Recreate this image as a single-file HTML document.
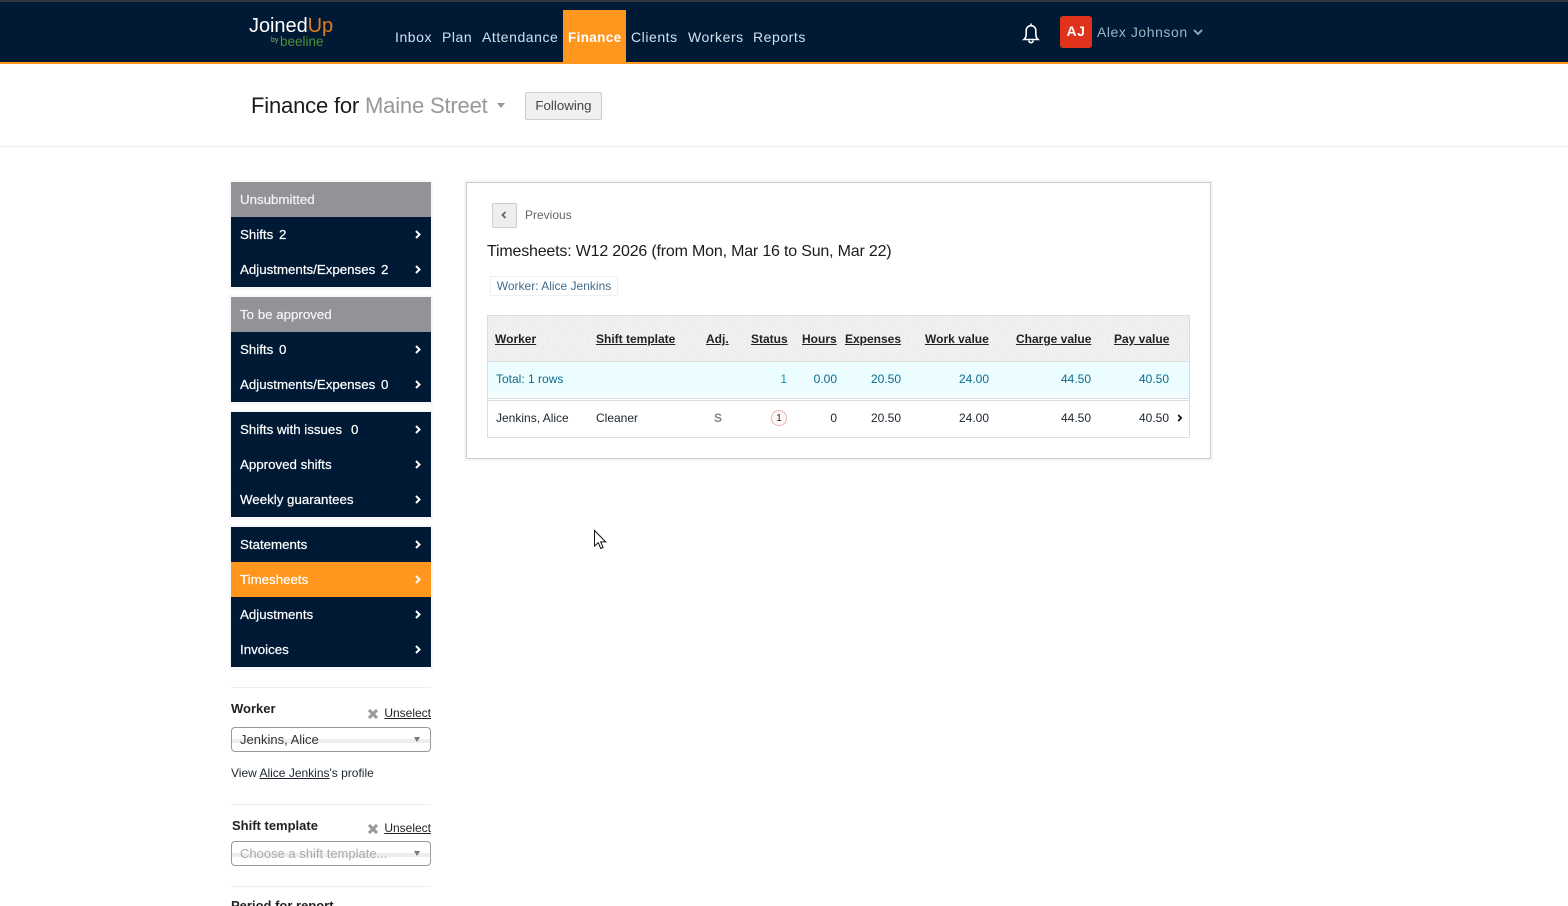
<!DOCTYPE html>
<html><head><meta charset="utf-8"><title>Finance</title>
<style>
html,body{margin:0;padding:0;background:#fff;overflow:hidden;width:1568px;height:906px}
#p{width:1568px;height:906px;position:relative;overflow:hidden;font-family:"Liberation Sans",sans-serif;color:#111}
.a,.t,.r{position:absolute;white-space:nowrap}
.t,.r{height:16px;line-height:16px}
.n{font-size:14px;letter-spacing:.55px;color:#cfe0ee;top:29px}
.s{position:absolute;left:231px;width:200px;height:35px;background:#001a35;color:#fff;font-size:13.3px;line-height:35px;text-indent:9px;white-space:nowrap;-webkit-text-stroke:.2px}
.s svg{position:absolute;left:184px;top:13px}
.s b{position:absolute;top:0;text-indent:0;font-weight:normal}
.h{background:#929297}
.g{position:absolute;left:229px;width:204px;background:#f8f7fb}
.th{font-size:12px;font-weight:bold;text-decoration:underline;color:#222;top:331px}
.c{font-size:12px;color:#1c2530}
.u{top:371px;color:#0e6a8c}
.v{top:410px}
.lb{font-size:13px;font-weight:bold;color:#222}
.sel{position:absolute;left:231px;width:198px;height:23px;border:1px solid #999;border-radius:4px;background:linear-gradient(#fff 0,#fff 11px,#eee 11px,#eee 15px,#fff 15px);font-size:13px;line-height:24px;text-indent:8px}
.sel i{position:absolute;left:182px;top:9px;width:0;height:0;border:3.5px solid transparent;border-top:5px solid #777;border-bottom:0}
.ln{position:absolute;left:231px;width:200px;height:1px;background:#eee}
.ul{font-size:12px;text-decoration:underline;color:#222}
</style></head><body>
<div id="p">

<div class="a" style="left:0;top:0;width:1568px;height:62px;background:#001a35"></div>
<div class="a" style="left:0;top:0;width:1568px;height:2px;background:#33363c"></div>
<div class="a" style="left:0;top:62px;width:1568px;height:2px;background:#ff971f"></div>
<div class="a" style="left:563px;top:10px;width:63px;height:52px;background:#ff971f"></div>

<div class="t" style="left:249px;top:15px;height:22px;line-height:22px;font-size:20px;letter-spacing:-.05px;color:#fff">Joined<span style="color:#d97f26">Up</span></div>
<div class="t" style="left:271px;top:36px;height:9px;line-height:9px;font-size:7px;color:#8fb37a">by</div>
<div class="t" style="left:280px;top:36px;height:12px;line-height:12px;font-size:13.5px;color:#4f8f35">beeline</div>

<div class="t n" style="left:395px">Inbox</div>
<div class="t n" style="left:442px">Plan</div>
<div class="t n" style="left:482px">Attendance</div>
<div class="t n" style="left:568px;top:30px;color:#fff;font-weight:bold;font-size:13.5px;letter-spacing:.35px">Finance</div>
<div class="t n" style="left:631px">Clients</div>
<div class="t n" style="left:688px">Workers</div>
<div class="t n" style="left:753px">Reports</div>

<svg class="a" style="left:1022px;top:22px" width="18" height="22" viewBox="0 0 18 22" fill="none" stroke="#fff" stroke-width="1.6"><path d="M2 17.5c1.6-1.5 2.2-3 2.2-5.5V8.5a4.8 4.8 0 0 1 9.6 0V12c0 2.500.6 4 2.200 5.500z"/><path d="M9 3.500V1.500M6.800 18.500a2.200 2.200 0 0 0 4.400 0"/></svg>
<div class="a" style="left:1060px;top:16px;width:32px;height:32px;background:#e1321b;border-radius:3px;color:#fff;font-size:14px;font-weight:bold;line-height:31px;text-align:center;letter-spacing:.5px">AJ</div>
<div class="t" style="left:1097px;top:24px;font-size:14px;letter-spacing:.55px;color:#9fb2c3">Alex Johnson</div>
<svg class="a" style="left:1193px;top:29px" width="10" height="7" viewBox="0 0 10 7" fill="none" stroke="#8fa2b3" stroke-width="2"><path d="M1 1l4 4 4-4"/></svg>

<div class="t" style="left:251px;top:92px;height:28px;line-height:28px;font-size:22px;letter-spacing:-.18px;color:#1b1b1b">Finance for <span style="color:#97979c">Maine Street</span></div>
<div class="a" style="left:497px;top:103px;width:0;height:0;border:4.500px solid transparent;border-top:5px solid #999;border-bottom:0"></div>
<div class="a" style="left:525px;top:92px;width:75px;height:26px;border:1px solid #ccc;border-radius:2px;background:#f0f0f0;font-size:13.3px;line-height:25px;text-align:center;color:#444">Following</div>
<div class="a" style="left:0;top:146px;width:1568px;height:1px;background:#eee"></div>

<!-- sidebar -->
<div class="g" style="top:180px;height:110px"></div>
<div class="g" style="top:295px;height:110px"></div>
<div class="g" style="top:410px;height:110px"></div>
<div class="g" style="top:525px;height:145px"></div>

<div class="s h" style="top:182px;color:#f3f3f3">Unsubmitted</div>
<div class="s" style="top:217px">Shifts<b style="left:48px">2</b><svg width="6" height="9" viewBox="0 0 6 9" fill="none" stroke="#fff" stroke-width="2"><path d="M1 1l3.500 3.500L1 8"/></svg></div>
<div class="s" style="top:252px">Adjustments/Expenses<b style="left:150px">2</b><svg width="6" height="9" viewBox="0 0 6 9" fill="none" stroke="#fff" stroke-width="2"><path d="M1 1l3.500 3.500L1 8"/></svg></div>

<div class="s h" style="top:297px;color:#f3f3f3">To be approved</div>
<div class="s" style="top:332px">Shifts<b style="left:48px">0</b><svg width="6" height="9" viewBox="0 0 6 9" fill="none" stroke="#fff" stroke-width="2"><path d="M1 1l3.500 3.500L1 8"/></svg></div>
<div class="s" style="top:367px">Adjustments/Expenses<b style="left:150px">0</b><svg width="6" height="9" viewBox="0 0 6 9" fill="none" stroke="#fff" stroke-width="2"><path d="M1 1l3.500 3.500L1 8"/></svg></div>

<div class="s" style="top:412px">Shifts with issues<b style="left:120px">0</b><svg width="6" height="9" viewBox="0 0 6 9" fill="none" stroke="#fff" stroke-width="2"><path d="M1 1l3.500 3.500L1 8"/></svg></div>
<div class="s" style="top:447px">Approved shifts<svg width="6" height="9" viewBox="0 0 6 9" fill="none" stroke="#fff" stroke-width="2"><path d="M1 1l3.500 3.500L1 8"/></svg></div>
<div class="s" style="top:482px">Weekly guarantees<svg width="6" height="9" viewBox="0 0 6 9" fill="none" stroke="#fff" stroke-width="2"><path d="M1 1l3.500 3.500L1 8"/></svg></div>

<div class="s" style="top:527px">Statements<svg width="6" height="9" viewBox="0 0 6 9" fill="none" stroke="#fff" stroke-width="2"><path d="M1 1l3.500 3.500L1 8"/></svg></div>
<div class="s" style="top:562px;background:#ff971f">Timesheets<svg width="6" height="9" viewBox="0 0 6 9" fill="none" stroke="#fff" stroke-width="2"><path d="M1 1l3.500 3.500L1 8"/></svg></div>
<div class="s" style="top:597px">Adjustments<svg width="6" height="9" viewBox="0 0 6 9" fill="none" stroke="#fff" stroke-width="2"><path d="M1 1l3.500 3.500L1 8"/></svg></div>
<div class="s" style="top:632px">Invoices<svg width="6" height="9" viewBox="0 0 6 9" fill="none" stroke="#fff" stroke-width="2"><path d="M1 1l3.500 3.500L1 8"/></svg></div>

<div class="ln" style="top:687px"></div>
<div class="t lb" style="left:231px;top:701px">Worker</div>
<svg class="a" style="left:368px;top:709px" width="10" height="10" viewBox="0 0 10 10" fill="none" stroke="#999" stroke-width="3"><path d="M1 1l8 8M9 1l-8 8"/></svg>
<div class="r ul" style="right:1137px;top:705px">Unselect</div>
<div class="sel" style="top:727px;color:#333">Jenkins, Alice<i></i></div>
<div class="t" style="left:231px;top:765px;font-size:12px;color:#1c2530">View <span style="text-decoration:underline">Alice Jenkins</span>'s profile</div>

<div class="ln" style="top:804px"></div>
<div class="t lb" style="left:232px;top:818px">Shift template</div>
<svg class="a" style="left:368px;top:824px" width="10" height="10" viewBox="0 0 10 10" fill="none" stroke="#999" stroke-width="3"><path d="M1 1l8 8M9 1l-8 8"/></svg>
<div class="r ul" style="right:1137px;top:820px">Unselect</div>
<div class="sel" style="top:841px;color:#aaa">Choose a shift template...<i></i></div>
<div class="ln" style="top:886px"></div>
<div class="t lb" style="left:231px;top:898px">Period for report</div>

<!-- main panel -->
<div class="a" style="left:464px;top:180px;width:749px;height:281px;background:#f6f5fa"></div>
<div class="a" style="left:466px;top:182px;width:743px;height:275px;border:1px solid #ccc;background:#fff"></div>
<div class="a" style="left:492px;top:203px;width:23px;height:23px;border:1px solid #ccc;border-radius:2px;background:#eee"></div>
<svg class="a" style="left:501px;top:211px" width="6" height="8" viewBox="0 0 6 8" fill="none" stroke="#666" stroke-width="1.800"><path d="M4.500 1L1.500 4l3 3"/></svg>
<div class="t" style="left:525px;top:207px;font-size:12px;color:#666">Previous</div>
<div class="t" style="left:487px;top:244px;font-size:16px;letter-spacing:-.19px;color:#1b1b1b">Timesheets: W12 2026 (from Mon, Mar 16 to Sun, Mar 22)</div>
<div class="a" style="left:490px;top:276px;width:126px;height:18px;border:1px solid #f0f0f0;font-size:12px;line-height:18px;text-align:center;color:#3f6b8e">Worker: Alice Jenkins</div>

<!-- table -->
<div class="a" style="left:487px;top:315px;width:701px;height:121px;border:1px solid #ddd"></div>
<svg class="a" style="left:488px;top:316px" width="701" height="45"><defs><pattern id="d" width="5" height="3" patternUnits="userSpaceOnUse"><rect width="5" height="3" fill="#efeeef"/><rect x="1" y="0" width="1" height="1" fill="#f7f7f7"/><rect x="3" y="2" width="1" height="1" fill="#f7f7f7"/></pattern></defs><rect width="701" height="45" fill="url(#d)"/></svg>
<div class="a" style="left:488px;top:361px;width:701px;height:1px;background:#ddd"></div>
<div class="a" style="left:488px;top:362px;width:701px;height:36px;background:#ebfdff"></div>
<div class="a" style="left:488px;top:391px;width:695px;height:7px;background:#f5feff"></div>
<div class="a" style="left:488px;top:398px;width:701px;height:1px;background:#ddd"></div>
<div class="a" style="left:488px;top:400px;width:701px;height:1px;background:#ddd"></div>

<div class="t th" style="left:495px">Worker</div>
<div class="t th" style="left:596px">Shift template</div>
<div class="t th" style="left:706px">Adj.</div>
<div class="t th" style="left:751px">Status</div>
<div class="t th" style="left:802px">Hours</div>
<div class="t th" style="left:845px">Expenses</div>
<div class="t th" style="left:925px">Work value</div>
<div class="t th" style="left:1016px">Charge value</div>
<div class="t th" style="left:1114px">Pay value</div>

<div class="t c u" style="left:496px">Total: 1 rows</div>
<div class="r c u" style="right:781px;color:#0b8fc0">1</div>
<div class="r c u" style="right:731px">0.00</div>
<div class="r c u" style="right:667px">20.50</div>
<div class="r c u" style="right:579px">24.00</div>
<div class="r c u" style="right:477px">44.50</div>
<div class="r c u" style="right:399px">40.50</div>

<div class="t c v" style="left:496px">Jenkins, Alice</div>
<div class="t c v" style="left:596px">Cleaner</div>
<div class="t c v" style="left:714px;color:#888;font-weight:bold">S</div>
<div class="a" style="left:771px;top:410px;width:14px;height:14px;border:1px solid #e3b5b5;border-radius:50%;font-size:10px;line-height:15px;text-align:center;color:#222;background:#fff8f6">1</div>
<div class="r c v" style="right:731px">0</div>
<div class="r c v" style="right:667px">20.50</div>
<div class="r c v" style="right:579px">24.00</div>
<div class="r c v" style="right:477px">44.50</div>
<div class="r c v" style="right:399px">40.50</div>
<svg class="a" style="left:1177px;top:414px" width="6" height="8" viewBox="0 0 6 8" fill="none" stroke="#111" stroke-width="1.800"><path d="M1.200 1l3 3-3 3"/></svg>

<!-- cursor -->
<svg class="a" style="left:593px;top:529px" width="15" height="22" viewBox="0 0 15 22"><path d="M1.500 1.500v15.500l3.800-3.300 2.400 5.800 2.400-1-2.400-5.600h5z" fill="#fff" stroke="#111" stroke-width="1"/></svg>
</div>
</body></html>
